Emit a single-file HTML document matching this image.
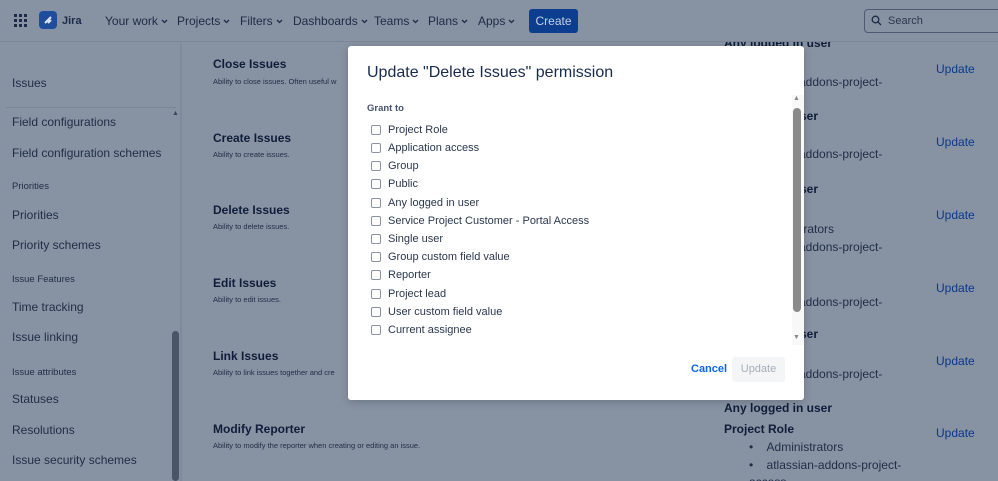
<!DOCTYPE html>
<html><head><style>
*{margin:0;padding:0;box-sizing:border-box}
html,body{width:998px;height:481px;overflow:hidden}
body{background:#8792a2;font-family:"Liberation Sans",sans-serif;position:relative;color:#101c36}
.a{position:absolute;white-space:nowrap}
.nav{font-size:12px;color:#1c2b47;top:14px}
.nav svg{margin-left:3px;vertical-align:1px}
.sb{font-size:12px;color:#1f2d48;left:12px}
.sh{font-size:9.5px;color:#1f2d48;left:12px}
.t{font-size:12px;font-weight:bold;left:213px;color:#0f1d3a}
.d{font-size:7.5px;left:213px;color:#1f2d48}
.up{font-size:12px;color:#0b3a8a;left:936px}
.r{font-size:12px;color:#1f2d48}
.rb{font-size:12px;font-weight:bold;color:#0f1d3a}
.cb{position:absolute;left:371px;width:10px;height:10px;border:1px solid #8a93a3;border-radius:2px;background:#fff}
.lb{position:absolute;left:388px;font-size:11px;color:#2a3850;white-space:nowrap}
</style></head><body>
<!-- main -->
<div class="a t" style="top:57px">Close Issues</div><div class="a d" style="top:77px">Ability to close issues. Often useful w</div>
<div class="a t" style="top:131px">Create Issues</div><div class="a d" style="top:150px">Ability to create issues.</div>
<div class="a t" style="top:203px">Delete Issues</div><div class="a d" style="top:222px">Ability to delete issues.</div>
<div class="a t" style="top:276px">Edit Issues</div><div class="a d" style="top:295px">Ability to edit issues.</div>
<div class="a t" style="top:349px">Link Issues</div><div class="a d" style="top:368px">Ability to link issues together and cre</div>
<div class="a t" style="top:422px">Modify Reporter</div><div class="a d" style="top:441px">Ability to modify the reporter when creating or editing an issue.</div>
<div class="a rb" style="left:724px;top:36px">Any logged in user</div>
<div class="a up" style="top:62px">Update</div><div class="a up" style="top:135px">Update</div><div class="a up" style="top:208px">Update</div><div class="a up" style="top:281px">Update</div><div class="a up" style="top:354px">Update</div><div class="a up" style="top:426px">Update</div>
<div class="a r" style="left:795px;top:75px">-addons-project-</div>
<div class="a rb" style="left:800px;top:109px">ser</div>
<div class="a r" style="left:795px;top:147px">-addons-project-</div>
<div class="a rb" style="left:800px;top:182px">ser</div>
<div class="a r" style="left:800px;top:222px">trators</div>
<div class="a r" style="left:795px;top:240px">-addons-project-</div>
<div class="a r" style="left:795px;top:295px">-addons-project-</div>
<div class="a rb" style="left:800px;top:327px">ser</div>
<div class="a r" style="left:795px;top:367px">-addons-project-</div>
<div class="a rb" style="left:724px;top:401px">Any logged in user</div>
<div class="a rb" style="left:724px;top:422px">Project Role</div>
<div class="a r" style="left:749px;top:440px">•&nbsp;&nbsp;&nbsp;&nbsp;Administrators</div>
<div class="a r" style="left:749px;top:458px">•&nbsp;&nbsp;&nbsp;&nbsp;atlassian-addons-project-</div>
<div class="a r" style="left:749px;top:475px">access</div>
<!-- header -->
<div class="a" style="left:0;top:0;width:998px;height:42px;background:#8792a2;border-bottom:1px solid #7a8596"></div>
<svg class="a" style="left:14px;top:14px" width="14" height="14"><g fill="#1c2b47"><rect x="0" y="0" width="3" height="3"/><rect x="5" y="0" width="3" height="3"/><rect x="10" y="0" width="3" height="3"/><rect x="0" y="5" width="3" height="3"/><rect x="5" y="5" width="3" height="3"/><rect x="10" y="5" width="3" height="3"/><rect x="0" y="10" width="3" height="3"/><rect x="5" y="10" width="3" height="3"/><rect x="10" y="10" width="3" height="3"/></g></svg>
<div class="a" style="left:39px;top:11px;width:18px;height:18px;background:#1d4d9c;border-radius:4px"></div>
<svg class="a" style="left:42px;top:14px" width="12" height="12"><path d="M3 9 L6 6 M6 9 L9 6 M6 6 L9 3" stroke="#dfe6f2" stroke-width="2" fill="none"/></svg>
<div class="a nav" style="left:62px;font-weight:bold;font-size:11px;top:15px">Jira</div>
<div class="a nav" style="left:105px">Your work<svg width="7" height="5"><path d="M1 1L3.5 3.5L6 1" stroke="#1c2b47" stroke-width="1.3" fill="none"/></svg></div>
<div class="a nav" style="left:177px">Projects<svg width="7" height="5"><path d="M1 1L3.5 3.5L6 1" stroke="#1c2b47" stroke-width="1.3" fill="none"/></svg></div>
<div class="a nav" style="left:240px">Filters<svg width="7" height="5"><path d="M1 1L3.5 3.5L6 1" stroke="#1c2b47" stroke-width="1.3" fill="none"/></svg></div>
<div class="a nav" style="left:293px">Dashboards<svg width="7" height="5"><path d="M1 1L3.5 3.5L6 1" stroke="#1c2b47" stroke-width="1.3" fill="none"/></svg></div>
<div class="a nav" style="left:374px">Teams<svg width="7" height="5"><path d="M1 1L3.5 3.5L6 1" stroke="#1c2b47" stroke-width="1.3" fill="none"/></svg></div>
<div class="a nav" style="left:428px">Plans<svg width="7" height="5"><path d="M1 1L3.5 3.5L6 1" stroke="#1c2b47" stroke-width="1.3" fill="none"/></svg></div>
<div class="a nav" style="left:478px">Apps<svg width="7" height="5"><path d="M1 1L3.5 3.5L6 1" stroke="#1c2b47" stroke-width="1.3" fill="none"/></svg></div>
<div class="a" style="left:529px;top:9px;width:49px;height:24px;background:#0d3d8f;border-radius:3px;color:#c7d2e4;font-size:12px;text-align:center;line-height:24px">Create</div>
<div class="a" style="left:864px;top:9px;width:140px;height:24px;border:1px solid #4c5a73;border-radius:4px"></div>
<svg class="a" style="left:871px;top:15px" width="11" height="11"><circle cx="4.5" cy="4.5" r="3.3" stroke="#1c2b47" stroke-width="1.3" fill="none"/><path d="M7 7L10 10" stroke="#1c2b47" stroke-width="1.3"/></svg>
<div class="a" style="left:888px;top:15px;font-size:11px;color:#2a3850">Search</div>
<!-- sidebar -->
<div class="a" style="left:180px;top:43px;width:2px;height:438px;background:#7f8a9b"></div>
<div class="a sb" style="top:76px">Issues</div>
<div class="a" style="left:6px;top:107px;width:170px;height:1px;background:#7a8596"></div>
<div class="a" style="left:172px;top:110px;font-size:7px;color:#3a4860">▲</div>
<div class="a" style="left:172px;top:331px;width:7px;height:150px;background:#4a5568;border-radius:4px"></div>
<div class="a sb" style="top:115px">Field configurations</div>
<div class="a sb" style="top:146px">Field configuration schemes</div>
<div class="a sh" style="top:181px">Priorities</div>
<div class="a sb" style="top:208px">Priorities</div>
<div class="a sb" style="top:238px">Priority schemes</div>
<div class="a sh" style="top:274px">Issue Features</div>
<div class="a sb" style="top:300px">Time tracking</div>
<div class="a sb" style="top:330px">Issue linking</div>
<div class="a sh" style="top:367px">Issue attributes</div>
<div class="a sb" style="top:392px">Statuses</div>
<div class="a sb" style="top:423px">Resolutions</div>
<div class="a sb" style="top:453px">Issue security schemes</div>
<!-- modal -->
<div class="a" style="left:348px;top:46px;width:456px;height:354px;background:#fff;border-radius:3px;box-shadow:0 2px 8px rgba(0,0,0,.2)"></div>
<div class="a" style="left:367px;top:64px;font-size:16px;color:#172b4d">Update "Delete Issues" permission</div>
<div class="a" style="left:367px;top:103px;font-size:9.5px;font-weight:bold;color:#44546f">Grant to</div>
<div class="a" style="left:792px;top:95px;width:12px;height:250px;background:#f8f8f8"></div>
<div class="a" style="left:793px;top:95px;font-size:7px;color:#888">▲</div>
<div class="a" style="left:793px;top:108px;width:8px;height:204px;background:#8a8a8a;border-radius:4px"></div>
<div class="a" style="left:793px;top:334px;font-size:7px;color:#888">▼</div>
<div class="cb" style="top:125px"></div><div class="lb" style="top:124px">Project Role</div>
<div class="cb" style="top:143px"></div><div class="lb" style="top:142px">Application access</div>
<div class="cb" style="top:161px"></div><div class="lb" style="top:160px">Group</div>
<div class="cb" style="top:179px"></div><div class="lb" style="top:178px">Public</div>
<div class="cb" style="top:198px"></div><div class="lb" style="top:197px">Any logged in user</div>
<div class="cb" style="top:216px"></div><div class="lb" style="top:215px">Service Project Customer - Portal Access</div>
<div class="cb" style="top:234px"></div><div class="lb" style="top:233px">Single user</div>
<div class="cb" style="top:252px"></div><div class="lb" style="top:251px">Group custom field value</div>
<div class="cb" style="top:270px"></div><div class="lb" style="top:269px">Reporter</div>
<div class="cb" style="top:289px"></div><div class="lb" style="top:288px">Project lead</div>
<div class="cb" style="top:307px"></div><div class="lb" style="top:306px">User custom field value</div>
<div class="cb" style="top:325px"></div><div class="lb" style="top:324px">Current assignee</div>
<div class="a" style="left:691px;top:363px;font-size:11px;font-weight:bold;color:#0c66e4">Cancel</div>
<div class="a" style="left:732px;top:357px;width:53px;height:25px;background:#f4f5f7;border-radius:3px;color:#a5adba;font-size:11px;text-align:center;line-height:25px">Update</div>
</body></html>
